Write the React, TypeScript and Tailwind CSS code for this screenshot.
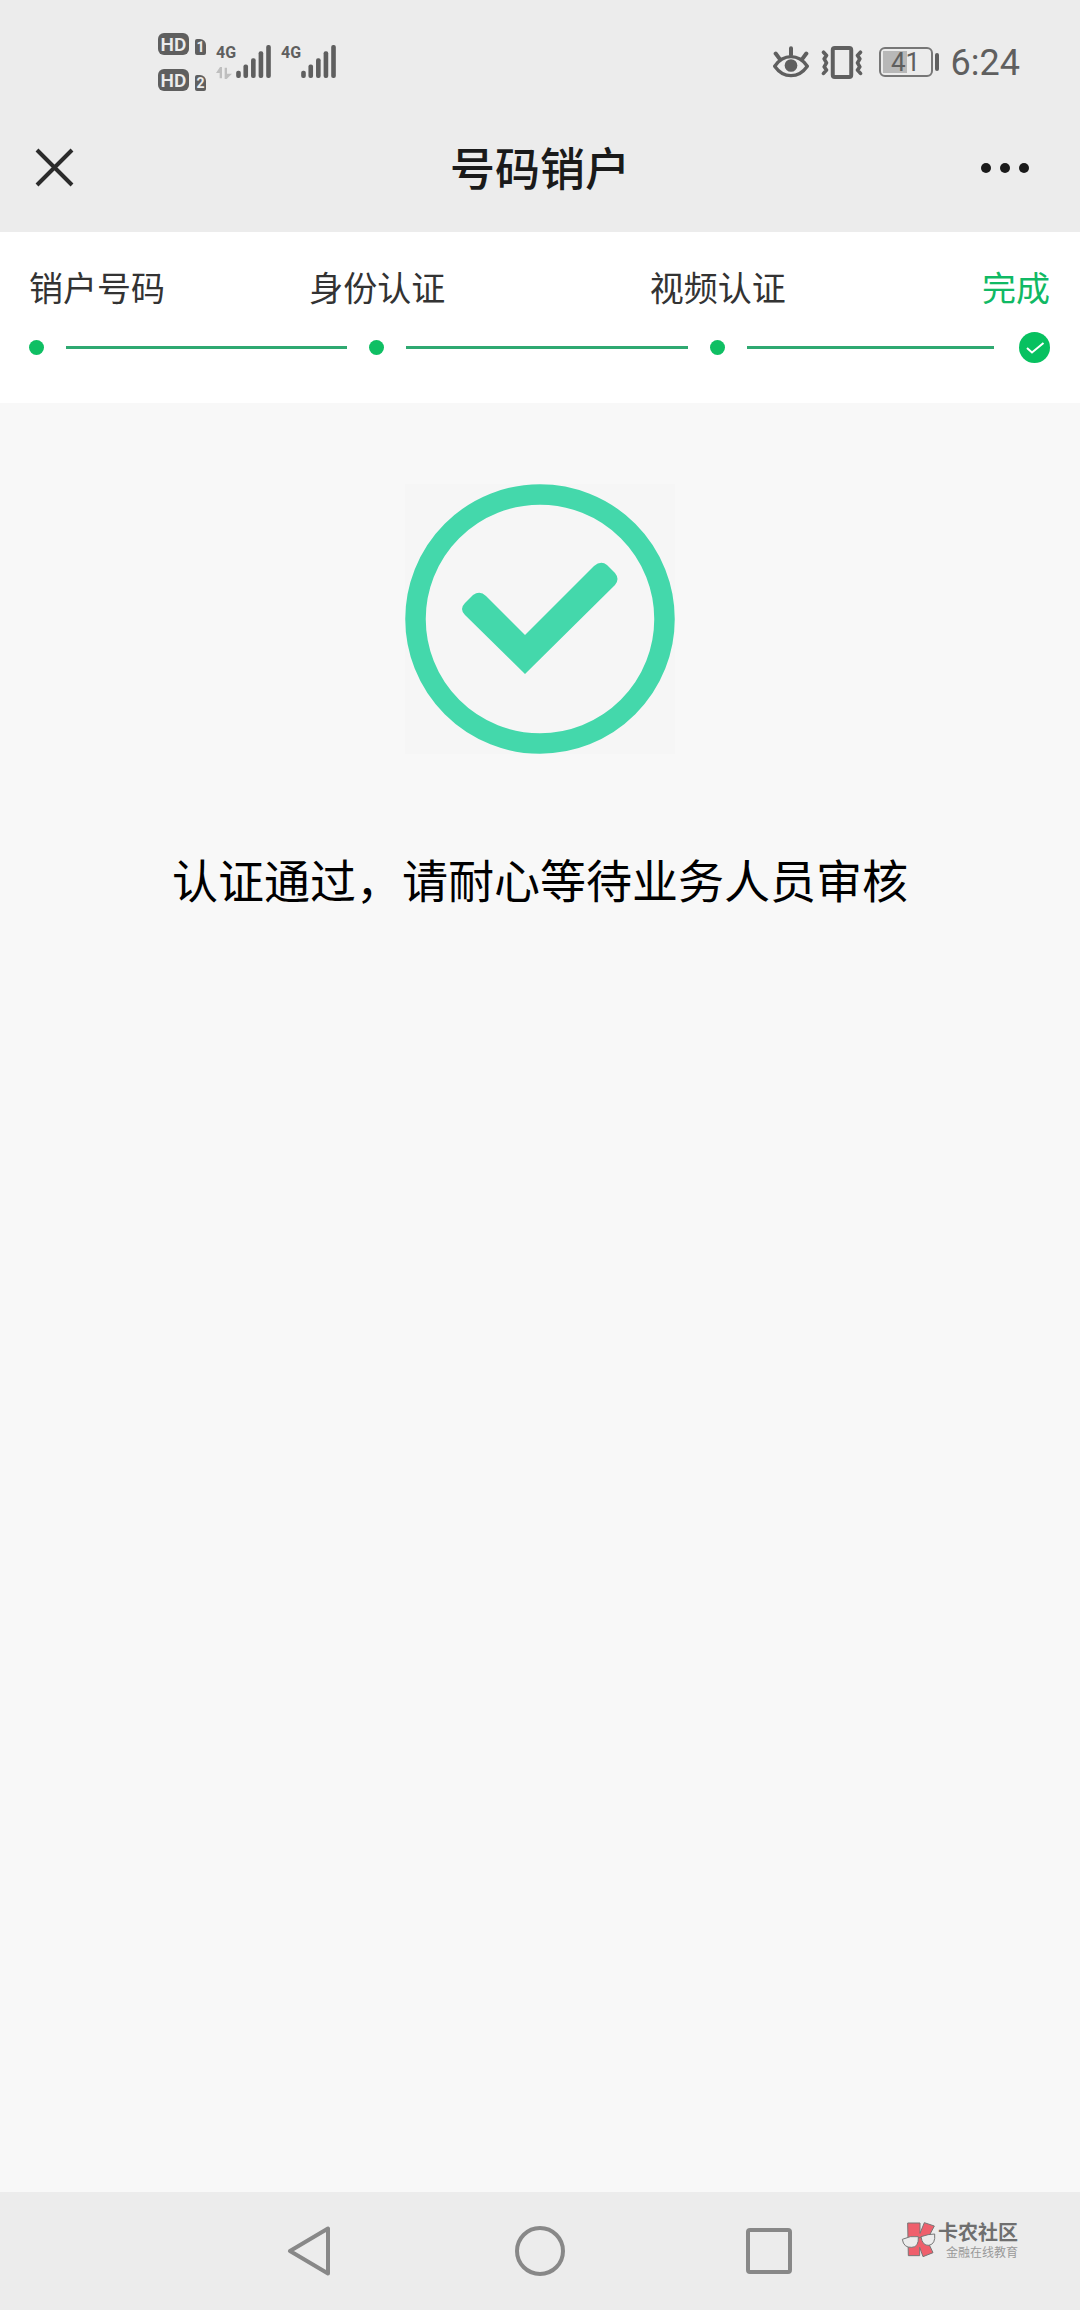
import { clsx } from "clsx";

const steps = ["销户号码", "身份认证", "视频认证", "完成"];

function SimBadge({ slot }: { slot: number }) {
    return (
        <div className="flex items-end gap-1.5">
            <span className="flex h-[22px] w-[31px] items-center justify-center rounded-md bg-[#5f5f5f] text-[19px] leading-none font-semibold text-[#ececec]">
                HD
            </span>
            <span className="flex h-4 w-[11px] items-center justify-center rounded-xs rounded-tr-md bg-[#5f5f5f] text-[14px] leading-none font-bold text-[#ececec]">
                {slot}
            </span>
        </div>
    );
}

function Signal({ data }: { data?: boolean }) {
    return (
        <div className="flex h-[34px] items-start">
            <div className="flex w-5 flex-col gap-1.5">
                <span className="text-[16px] leading-4 font-bold">4G</span>
                {data && (
                    <svg viewBox="0 0 48 36" className="h-3 w-4 fill-[#bfbfbf]" aria-hidden="true">
                        <path d="M12 0 18 0V34H11V18H0ZM26 2H33V20H48L32 36H26Z" />
                    </svg>
                )}
            </div>
            <svg viewBox="0 0 105 100" className="h-[33px] w-[35px] fill-[#5f5f5f]" aria-hidden="true">
                <rect x="0" y="78" width="14" height="22" rx="6" />
                <rect x="22" y="59" width="14" height="41" rx="6" />
                <rect x="45" y="40" width="14" height="60" rx="6" />
                <rect x="68" y="19" width="14" height="81" rx="6" />
                <rect x="91" y="0" width="14" height="100" rx="6" />
            </svg>
        </div>
    );
}

function StatusBar() {
    return (
        <div className="flex h-[124px] items-center pr-[60px] pl-[158px] font-[Roboto,sans-serif] text-[#5f5f5f]">
            <div className="flex flex-col gap-3.5">
                <SimBadge slot={1} />
                <SimBadge slot={2} />
            </div>
            <div className="ml-2.5 flex gap-2.5">
                <Signal data />
                <Signal />
            </div>

            <div className="ml-auto flex items-center">
                <svg viewBox="0 0 108 98" className="h-[33px] w-9" fill="none" stroke="#5f5f5f" aria-hidden="true">
                    <path d="M5 60C32 22 76 22 103 60C76 98 32 98 5 60Z" strokeWidth="10" strokeLinejoin="round" />
                    <path d="M54 6V26M8 22 20 38M100 22 88 38" strokeWidth="12" strokeLinecap="round" />
                    <circle cx="54" cy="58" r="19" fill="#5f5f5f" stroke="none" />
                </svg>
                <svg
                    viewBox="0 0 126 100"
                    className="ml-3 h-[33px] w-[42px]"
                    fill="none"
                    stroke="#5f5f5f"
                    strokeWidth="12"
                    strokeLinejoin="round"
                    strokeLinecap="round"
                    aria-hidden="true"
                >
                    <rect x="35" y="6" width="56" height="88" rx="6" />
                    <path d="M7 19 16 29 9 39 16 51 9 63 16 73 7 83M119 19 110 29 117 39 110 51 117 63 110 73 119 83" strokeWidth="11" />
                </svg>
                <div className="ml-4 flex items-center gap-0.5">
                    <div className="relative flex h-[30px] w-[54px] items-center justify-center rounded-md border-2 border-[#777]">
                        <div className="absolute inset-y-0.5 left-0.5 w-[24px] bg-[#b8b8b8]" />
                        <span className="relative text-[26px] leading-none">41</span>
                    </div>
                    <div className="h-[18px] w-1 rounded-full bg-[#5f5f5f]" />
                </div>
                <time className="ml-3 pt-0.5 text-[36px] leading-none">6:24</time>
            </div>
        </div>
    );
}

function TitleBar() {
    return (
        <div className="grid h-[88px] grid-cols-3 items-center px-[35px] text-[#1a1a1a]">
            <button type="button" aria-label="关闭" className="size-10">
                <svg viewBox="0 0 40 40" className="size-10" stroke="#2b2b2b" strokeWidth="4" aria-hidden="true">
                    <path d="M2 2 37 37M37 2 2 37" />
                </svg>
            </button>
            <h1 className="pb-1 text-center text-[45px] leading-none font-medium">号码销户</h1>
            <button type="button" aria-label="更多" className="mr-[15px] ml-auto flex h-10 items-center">
                <svg viewBox="0 0 50 12" className="h-3 w-[50px] fill-[#1a1a1a]" aria-hidden="true">
                    <circle cx="6" cy="6" r="5" />
                    <circle cx="25" cy="6" r="5" />
                    <circle cx="44" cy="6" r="5" />
                </svg>
            </button>
        </div>
    );
}

function Steps() {
    return (
        <ol className="flex h-[171px] bg-white pr-[30px] pl-[29px] pt-[31px] text-[34px] leading-[48px] text-[#333]">
            {steps.map((step, i) => {
                const last = i === steps.length - 1;
                return (
                    <li
                        key={step}
                        className={clsx(
                            "flex flex-col gap-[21px]",
                            last ? "-ml-[68px] items-end text-[#10b964]" : "flex-1"
                        )}
                    >
                        <span className={clsx("w-max", i > 0 && !last && "-ml-15")}>{step}</span>
                        <div className={clsx("flex h-[31px] items-center", !last && "w-full")}>
                            {last ? (
                                <svg viewBox="0 0 31 31" className="size-[31px]" aria-hidden="true">
                                    <circle cx="15.5" cy="15.5" r="15.5" fill="#07c160" />
                                    <path d="M8 16 13 20.500 24.500 11" fill="none" stroke="#fff" strokeWidth="2" />
                                </svg>
                            ) : (
                                <>
                                    <span className="size-[15px] rounded-full bg-[#0fbf63]" />
                                    <span
                                        className={clsx(
                                            "ml-[22px] h-[3px] flex-1 bg-[#2fa971]",
                                            i === steps.length - 2 ? "mr-14" : "mr-[22px]"
                                        )}
                                    />
                                </>
                            )}
                        </div>
                    </li>
                );
            })}
        </ol>
    );
}

function Result() {
    return (
        <section className="flex flex-col items-center pt-[81px]">
            <svg viewBox="0 0 270 270" className="size-[270px] bg-[#f6f6f6]" aria-hidden="true">
                <circle cx="135" cy="135" r="124.500" fill="none" stroke="#44d8ab" strokeWidth="20.500" />
                <path
                    d="M120 190 60 131Q54 125 60 119L68 111Q75 106 81 112L120 151 189 82Q196 76 202 81L210 89Q215 95 210 101Z"
                    fill="#44d8ab"
                />
            </svg>
            <p className="mt-23 text-[46px] leading-[64px] text-black">认证通过，请耐心等待业务人员审核</p>
        </section>
    );
}

function Watermark() {
    return (
        <div className="absolute top-[30px] right-[62px] flex items-center gap-0.5 text-[#6f6f6f]">
            <svg viewBox="0 0 105 108" className="h-9 w-[35px]" stroke="#777" strokeWidth="3" aria-hidden="true">
                <path d="M20 3H57V34L70 2 100 12 78 54 96 92 66 104 56 76V101H22Z" fill="#ef5f6c" />
                <path d="M4 52Q28 40 52 44Q54 76 32 76Q8 78 4 52Z" fill="#ececec" />
                <path d="M60 44Q82 36 101 36Q104 66 84 70Q64 72 60 44Z" fill="#ececec" />
                <path d="M52 48 60 46" fill="none" />
            </svg>
            <div className="flex flex-col items-end gap-1">
                <span className="text-[20px] leading-5 font-bold">卡农社区</span>
                <span className="text-[12px] leading-3 text-[#999]">金融在线教育</span>
            </div>
        </div>
    );
}

function NavBar() {
    return (
        <nav className="relative flex h-[118px] items-center justify-center gap-[180px] bg-[#ececec]">
            <button type="button" aria-label="返回">
                <svg viewBox="0 0 50 50" className="size-[50px]" fill="none" stroke="#888" strokeWidth="4" strokeLinejoin="round" aria-hidden="true">
                    <path d="M43 2.500V47.500L5 25Z" />
                </svg>
            </button>
            <button type="button" aria-label="主页">
                <svg viewBox="0 0 50 50" className="size-[50px]" fill="none" stroke="#888" strokeWidth="4" aria-hidden="true">
                    <circle cx="25" cy="25" r="23" />
                </svg>
            </button>
            <button type="button" aria-label="最近任务">
                <svg viewBox="0 0 50 50" className="size-[50px]" fill="none" stroke="#888" strokeWidth="4" aria-hidden="true">
                    <rect x="3" y="4" width="42" height="42" rx="2" />
                </svg>
            </button>
            <Watermark />
        </nav>
    );
}

export default function App() {
    return (
        <div className="flex min-h-screen flex-col bg-[#f8f8f8] font-['Noto_Sans_CJK_SC',sans-serif]">
            <header className="bg-[#ececec] pb-5">
                <StatusBar />
                <TitleBar />
            </header>
            <main className="flex-1">
                <Steps />
                <Result />
            </main>
            <NavBar />
        </div>
    );
}
